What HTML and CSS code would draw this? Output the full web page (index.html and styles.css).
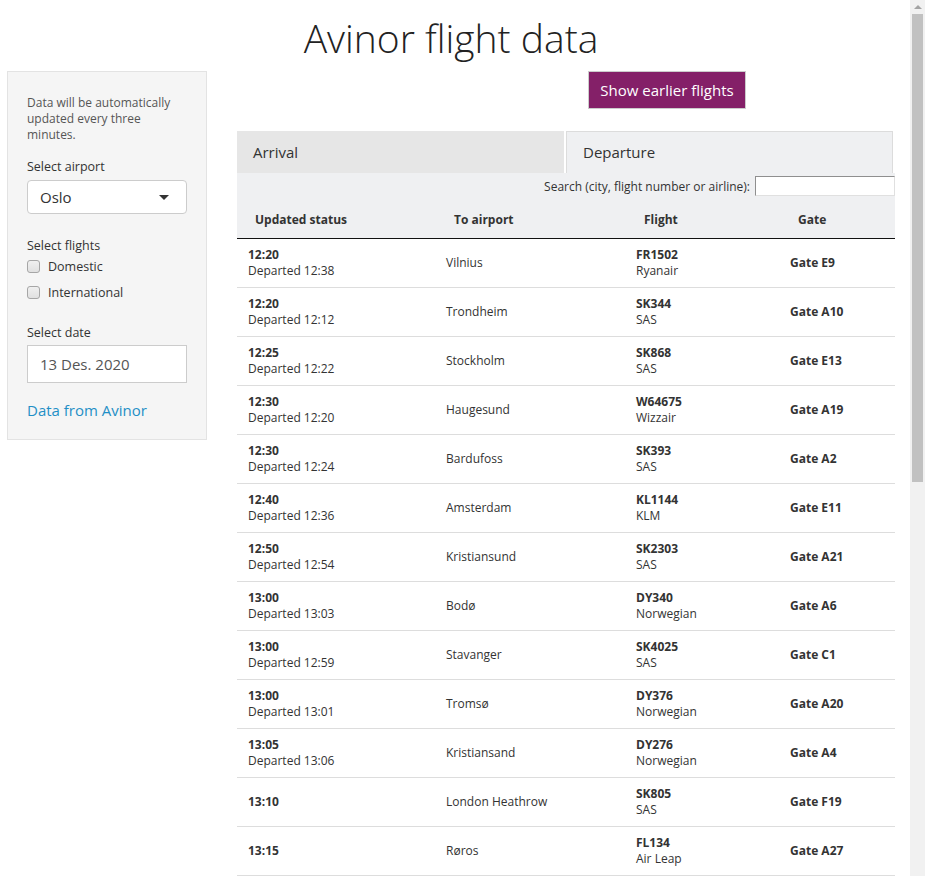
FILE: index.html
```html
<!DOCTYPE html>
<html>
<head>
<meta charset="utf-8">
<title>Avinor flight data</title>
<link rel="stylesheet" href="styles.css">
</head>
<body>
<div class="viewport">
  <div class="page">
    <h1 class="title">Avinor flight data</h1>
    <div class="layout">
      <aside class="sidebar">
        <p class="help">Data will be automatically updated every three minutes.</p>
        <label class="label airport-label">Select airport</label>
        <div class="select"><span>Oslo</span><span class="caret"></span></div>
        <label class="label flights-label">Select flights</label>
        <div class="check"><span class="box"></span><span>Domestic</span></div>
        <div class="check"><span class="box"></span><span>International</span></div>
        <label class="label date-label">Select date</label>
        <div class="date">13 Des. 2020</div>
        <a class="source" href="#">Data from Avinor</a>
      </aside>
      <main class="main">
        <div class="btn-row"><button class="btn">Show earlier flights</button></div>
        <div class="tabs">
          <div class="tab">Arrival</div>
          <div class="tab active">Departure</div>
        </div>
        <div class="panel">
          <div class="search"><label>Search (city, flight number or airline):</label><span class="search-input"></span></div>
          <table class="flights">
            <colgroup><col class="c1"><col class="c2"><col class="c3"><col class="c4"></colgroup>
            <thead>
              <tr><th>Updated status</th><th>To airport</th><th>Flight</th><th>Gate</th></tr>
            </thead>
            <tbody>
              <tr><td><b>12:20</b><br>Departed 12:38</td><td>Vilnius</td><td><b>FR1502</b><br>Ryanair</td><td><b>Gate E9</b></td></tr>
              <tr><td><b>12:20</b><br>Departed 12:12</td><td>Trondheim</td><td><b>SK344</b><br>SAS</td><td><b>Gate A10</b></td></tr>
              <tr><td><b>12:25</b><br>Departed 12:22</td><td>Stockholm</td><td><b>SK868</b><br>SAS</td><td><b>Gate E13</b></td></tr>
              <tr><td><b>12:30</b><br>Departed 12:20</td><td>Haugesund</td><td><b>W64675</b><br>Wizzair</td><td><b>Gate A19</b></td></tr>
              <tr><td><b>12:30</b><br>Departed 12:24</td><td>Bardufoss</td><td><b>SK393</b><br>SAS</td><td><b>Gate A2</b></td></tr>
              <tr><td><b>12:40</b><br>Departed 12:36</td><td>Amsterdam</td><td><b>KL1144</b><br>KLM</td><td><b>Gate E11</b></td></tr>
              <tr><td><b>12:50</b><br>Departed 12:54</td><td>Kristiansund</td><td><b>SK2303</b><br>SAS</td><td><b>Gate A21</b></td></tr>
              <tr><td><b>13:00</b><br>Departed 13:03</td><td>Bodø</td><td><b>DY340</b><br>Norwegian</td><td><b>Gate A6</b></td></tr>
              <tr><td><b>13:00</b><br>Departed 12:59</td><td>Stavanger</td><td><b>SK4025</b><br>SAS</td><td><b>Gate C1</b></td></tr>
              <tr><td><b>13:00</b><br>Departed 13:01</td><td>Tromsø</td><td><b>DY376</b><br>Norwegian</td><td><b>Gate A20</b></td></tr>
              <tr><td><b>13:05</b><br>Departed 13:06</td><td>Kristiansand</td><td><b>DY276</b><br>Norwegian</td><td><b>Gate A4</b></td></tr>
              <tr><td><b>13:10</b></td><td>London Heathrow</td><td><b>SK805</b><br>SAS</td><td><b>Gate F19</b></td></tr>
              <tr><td><b>13:15</b></td><td>Røros</td><td><b>FL134</b><br>Air Leap</td><td><b>Gate A27</b></td></tr>
            </tbody>
          </table>
        </div>
      </main>
    </div>
  </div>
  <div class="scrollbar">
    <div class="arrow"></div>
    <div class="thumb"></div>
  </div>
</div>
</body>
</html>
```
FILE: styles.css
```css
html, body {
  margin: 0;
  padding: 0;
  background: #fff;
}
body {
  font-family: "Open Sans", "DejaVu Sans", sans-serif;
  color: #333;
}
.viewport {
  display: flex;
  width: 925px;
  height: 876px;
  overflow: hidden;
}
.page {
  width: 910px;
  flex: none;
}
.title {
  margin: 16px 0 11px;
  padding-right: 8px;
  font-size: 39px;
  line-height: 44px;
  font-weight: 300;
  text-align: center;
  color: #222;
}
.layout {
  display: flex;
  align-items: flex-start;
  padding-left: 7px;
  gap: 30px;
}
.sidebar {
  width: 200px;
  box-sizing: border-box;
  background: #f5f5f5;
  border: 1px solid #e3e3e3;
  padding: 19px 19px 0;
  height: 369px;
  display: flex;
  flex-direction: column;
}
.help {
  margin: 4px 0 0;
  font-size: 12px;
  line-height: 16px;
  color: #555;
}
.label {
  display: block;
  font-size: 12.5px;
  line-height: 16px;
  color: #333;
}
.airport-label {
  margin-top: 16px;
}
.select {
  margin-top: 5px;
  height: 34px;
  box-sizing: border-box;
  border: 1px solid #ccc;
  border-radius: 4px;
  background: #fff;
  display: flex;
  align-items: center;
  justify-content: space-between;
  padding: 0 17px 0 12px;
  font-size: 15px;
  color: #333;
}
.caret {
  width: 0;
  height: 0;
  border-left: 5px solid transparent;
  border-right: 5px solid transparent;
  border-top: 5px solid #333;
}
.flights-label {
  margin-top: 24px;
}
.check {
  display: flex;
  align-items: center;
  gap: 8px;
  font-size: 12.5px;
  line-height: 16px;
  margin-top: 2px;
  height: 21px;
}
.check + .check {
  margin-top: 5px;
}
.box {
  width: 11px;
  height: 11px;
  border: 1px solid #a6a6a6;
  border-radius: 3px;
  background: linear-gradient(#f0f0f0, #e0e0e0);
}
.date-label {
  margin-top: 22px;
}
.date {
  margin-top: 4px;
  height: 38px;
  box-sizing: border-box;
  border: 1px solid #ccc;
  background: #fff;
  padding: 0 12px;
  display: flex;
  align-items: center;
  font-size: 15px;
  color: #555;
}
.source {
  margin-top: 17px;
  font-size: 15px;
  line-height: 20px;
  color: #1f8fc6;
  text-decoration: none;
}
.main {
  width: 658px;
  flex: none;
}
.btn-row {
  padding-left: 351px;
}
.btn {
  width: 158px;
  height: 38px;
  border: 1px solid #ccc;
  background: #842068;
  color: #fff;
  font-family: "Open Sans", sans-serif;
  font-size: 15px;
  padding: 0;
  cursor: pointer;
}
.tabs {
  margin-top: 22px;
  display: flex;
  gap: 2px;
}
.tab {
  width: 327px;
  height: 42px;
  box-sizing: border-box;
  background: #e6e6e6;
  padding: 0 16px 1px;
  display: flex;
  align-items: center;
  font-size: 15px;
  color: #333;
}
.tab.active {
  background: #eff0f2;
  border: 1px solid #dcdcdc;
  border-bottom: none;
}
.panel {
  background: #eff0f2;
}
.search {
  display: flex;
  justify-content: flex-end;
  align-items: center;
  gap: 5px;
  padding-top: 3px;
  height: 20px;
  font-size: 12px;
}
.search-input {
  width: 140px;
  height: 20px;
  box-sizing: border-box;
  background: #fff;
  border-top: 1px solid #8f8f8f;
  border-left: 1px solid #8f8f8f;
  border-right: 1px solid #e0e0e0;
  border-bottom: 1px solid #e0e0e0;
}
.flights {
  width: 658px;
  table-layout: fixed;
  border-collapse: collapse;
  font-size: 12px;
  line-height: 16px;
}
.c1 { width: 199px; }
.c2 { width: 190px; }
.c3 { width: 154px; }
.c4 { width: 115px; }
.flights th {
  text-align: left;
  font-weight: 700;
  padding: 16px 10px 10px 18px;
  border-bottom: 1px solid #111;
  color: #333;
}
.flights tbody {
  background: #fff;
}
.flights td {
  padding: 8px 10px;
  border-bottom: 1px solid #ddd;
  vertical-align: middle;
  color: #333;
}
.flights td:first-child {
  padding-left: 11px;
}
.flights b {
  font-weight: 700;
}
.scrollbar {
  width: 15px;
  flex: none;
  background: #f1f1f1;
  display: flex;
  flex-direction: column;
  align-items: center;
}
.arrow {
  margin-top: 5px;
  width: 0;
  height: 0;
  border-left: 4px solid transparent;
  border-right: 4px solid transparent;
  border-bottom: 4px solid #a3a3a3;
}
.thumb {
  margin-top: 5px;
  width: 11px;
  height: 468px;
  background: #c1c1c1;
}
```
